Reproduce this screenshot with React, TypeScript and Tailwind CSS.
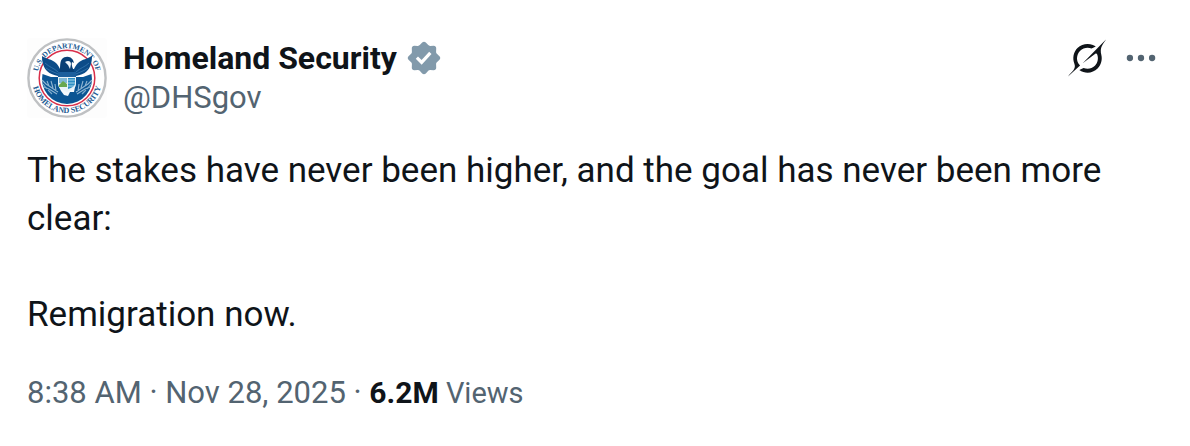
const Seal = () => (
  <svg viewBox="0 0 80 80" className="size-20" role="img" aria-label="Homeland Security seal">
    <defs>
      <path id="seal-top" d="M11.9 50 A29.8 29.8 0 1 1 68.1 50" />
      <path id="seal-bottom" d="M6.2 30 A35.2 35.2 0 1 0 73.8 30" />
    </defs>

    {/* rings */}
    <rect width="80" height="80" rx="3" fill="#fdfdfd" />
    <circle cx="40" cy="40" r="38.6" fill="#fff" stroke="#bfc1c3" strokeWidth="2.4" />
    <circle cx="40" cy="40" r="27.8" fill="#fff" stroke="#d9304a" strokeWidth="1.5" />

    <g fill="#1f5c93" fontFamily="'Liberation Serif', serif" fontWeight="700">
      <text textAnchor="middle" fontSize="7.5">
        <textPath href="#seal-top" startOffset="50%">U.S. DEPARTMENT OF</textPath>
      </text>
      <text textAnchor="middle" fontSize="8">
        <textPath href="#seal-bottom" startOffset="50%">HOMELAND SECURITY</textPath>
      </text>
    </g>

    {/* lower field */}
    <path d="M15.500 36 A25 25 0 1 0 64.500 36 L56 39 H24 Z" fill="#0b5593" />

    {/* wings */}
    <path
      d="M15 18 C19 21 25 21 29 25 C31 27 32 29 33 31 H47 C48 29 49 27 51 25 C55 21 61 21 65 18 C65 25 63 30 60 33 C57 36 53 37 49 38 H31 C27 37 23 36 20 33 C17 30 15 25 15 18 Z"
      fill="#0c4c88"
    />
    <path
      d="M18 25 C22 29 27 30 31 34 M19 30 C23 33 27 34 31 36 M62 25 C58 29 53 30 49 34 M61 30 C57 33 53 34 49 36"
      fill="none"
      stroke="#3f7fb5"
      strokeWidth="0.7"
    />
    {/* head */}
    <path d="M32 35 C34 31 32 25 35 21 C38 17.500 44 18 46 22 L47 25 L45 24 C44 27 46 31 48 35 Z" fill="#083f75" />
    <path d="M38 24 C41 22 44 23 44 26 L43 31 L41 27 Z" fill="#eef5fa" />

    {/* branch and arrows */}
    <path
      d="M15 42 L19 46 L31 54 M17 49 L22 51 L30 56 M20 43 L22 48 M24 43 L26 50 M28 46 L29 53 M65 42 L61 46 L49 54 M63 49 L58 51 L50 56 M60 43 L58 48 M56 43 L54 50 M52 46 L51 53"
      fill="none"
      stroke="#8fb5d2"
      strokeWidth="1.1"
    />
    <path d="M16 46 L20 51 M21 52 L25 56 M64 46 L60 51 M59 52 L55 56" fill="none" stroke="#7fabcc" strokeWidth="1.2" />

    {/* tail and shield */}
    <path d="M32 49 L48 49 L47 54 L43 54 L41 58 L37 57 L34 53 Z" fill="#f4f9fc" />
    <path d="M31 35 H49 V46 C49 50 45 52 40 54 C35 52 31 50 31 46 Z" fill="#e9f3f8" />
    <path d="M31 34 H49 V39 H31 Z" fill="#1c5f9c" />
    <path d="M32 40 H40 V45 H32 Z" fill="#7fb8d6" />
    <path d="M32 47 L36 43 L40 46 V49 L32 49 Z" fill="#69a84f" />
    <path d="M41 40 H48 V46 C47 49 44 50 41 51 Z" fill="#2c8fc4" />
    <path d="M41 42 H48 M41 45 H48 M41 48 H47" stroke="#c5e6f4" strokeWidth="0.8" />
  </svg>
);

const VerifiedBadge = () => (
  <svg viewBox="0 0 22 22" className="size-[38px] shrink-0" role="img" aria-label="Verified account">
    <path
      fill="#829aab"
      fillRule="evenodd"
      clipRule="evenodd"
      d="M12.05 2.056c-.568-.608-1.532-.608-2.1 0l-1.393 1.49c-.284.303-.685.47-1.1.455L5.42 3.932c-.832-.028-1.514.654-1.486 1.486l.069 2.039c.014.415-.152.816-.456 1.1l-1.49 1.392c-.608.568-.608 1.533 0 2.101l1.49 1.393c.304.284.47.684.456 1.1l-.07 2.038c-.027.832.655 1.514 1.487 1.486l2.038-.069c.415-.014.816.152 1.1.455l1.392 1.49c.569.609 1.533.609 2.102 0l1.393-1.49c.283-.303.684-.47 1.099-.455l2.038.069c.832.028 1.515-.654 1.486-1.486L18 14.542c-.015-.415.152-.815.455-1.099l1.49-1.393c.608-.568.608-1.533 0-2.101l-1.49-1.393c-.303-.283-.47-.684-.455-1.1l.068-2.038c.029-.832-.654-1.514-1.486-1.486l-2.038.07c-.415.013-.816-.153-1.1-.456zm-5.817 9.367l3.429 3.428 5.683-6.206-1.347-1.247-4.4 4.795-2.072-2.072z"
    />
  </svg>
);

const GrokIcon = () => (
  <svg viewBox="0 0 33 32" className="size-[38px]" fill="currentColor" aria-hidden="true">
    <path d="M12.745 20.54l10.97-8.19c.539-.4 1.307-.244 1.564.38 1.349 3.288.746 7.241-1.938 9.955-2.683 2.714-6.417 3.31-9.83 1.954l-3.728 1.745c5.347 3.697 11.84 2.782 15.898-1.324 3.219-3.255 4.216-7.692 3.284-11.693l.008.009c-1.351-5.878.332-8.227 3.782-13.031L33 0l-4.54 4.59v-.014L12.743 20.544m-2.263 1.987c-3.837-3.707-3.175-9.446.1-12.755 2.42-2.449 6.388-3.448 9.852-1.979l3.72-1.737c-.67-.49-1.53-1.017-2.515-1.387-4.455-1.854-9.789-.931-13.41 2.728-3.483 3.523-4.579 8.94-2.697 13.561 1.405 3.454-.899 5.898-3.22 8.364C1.49 30.2.666 31.074 0 32l10.478-9.466" />
  </svg>
);

const MoreIcon = () => (
  <svg viewBox="0 0 24 24" className="size-[38px]" fill="currentColor" aria-hidden="true">
    <circle cx="5" cy="12" r="2" />
    <circle cx="12" cy="12" r="2" />
    <circle cx="19" cy="12" r="2" />
  </svg>
);

const App = () => {
  return (
    <article className="bg-white pt-[38px] pr-[30px] pb-8 pl-[27px] font-[Roboto,sans-serif] text-[#0f1419]">
      <header className="flex items-start gap-4">
        <a href="#profile" className="shrink-0">
          <Seal />
        </a>
        <div className="min-w-0 flex-1 leading-10">
          <div className="flex items-center gap-2">
            <a href="#profile" className="text-[32px] font-bold">Homeland Security</a>
            <VerifiedBadge />
          </div>
          <a href="#profile" className="block text-[31px] text-[#536471]">@DHSgov</a>
        </div>
        <div className="flex h-10 items-center gap-4">
          <button type="button" aria-label="Explain this post">
            <GrokIcon />
          </button>
          <button type="button" aria-label="More" className="text-[#536471]">
            <MoreIcon />
          </button>
        </div>
      </header>

      <div className="mt-[29px] space-y-12 text-[35px] leading-12">
        <p>The stakes have never been higher, and the goal has never been more clear:</p>
        <p>Remigration now.</p>
      </div>

      <footer className="mt-[34px] text-[31px] leading-10 text-[#536471]">
        <a href="#status">
          <time dateTime="2025-11-28T08:38">8:38 AM · Nov 28, 2025</time>
        </a>
        <span> · </span>
        <a href="#views" className="text-[29px]">
          <span className="text-[30px] font-bold text-[#0f1419]">6.2M</span> Views
        </a>
      </footer>
    </article>
  );
};

export default App;
